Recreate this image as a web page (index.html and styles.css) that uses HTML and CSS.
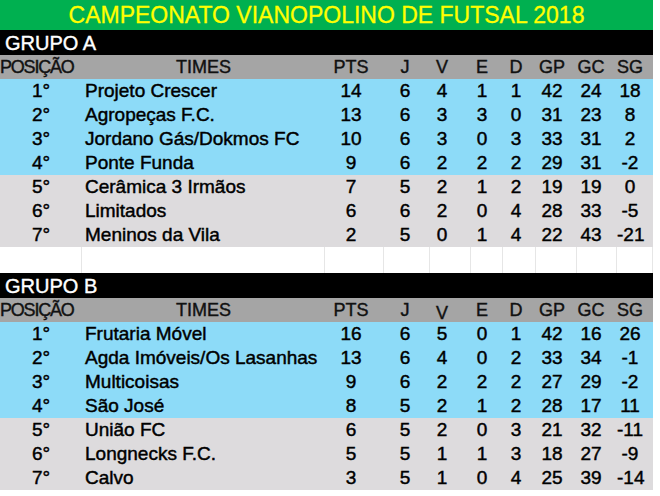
FILE: index.html
```html
<!DOCTYPE html>
<html lang="pt-BR">
<head>
<meta charset="utf-8">
<title>Campeonato Vianopolino de Futsal 2018</title>
<link rel="stylesheet" href="styles.css">
</head>
<body>
<div class="sheet">
  <div class="title">CAMPEONATO VIANOPOLINO DE FUTSAL 2018</div>

  <div class="group">GRUPO A</div>
  <div class="row head">
    <div class="pos narrow">POSIÇÃO</div><div class="team center">TIMES</div>
    <div class="n c1">PTS</div><div class="n c2">J</div><div class="n c3">V</div><div class="n c4">E</div><div class="n c5">D</div><div class="n c6">GP</div><div class="n c7">GC</div><div class="n c8">SG</div>
  </div>
  <div class="row q"><div class="pos">1°</div><div class="team">Projeto Crescer</div><div class="n c1">14</div><div class="n c2">6</div><div class="n c3">4</div><div class="n c4">1</div><div class="n c5">1</div><div class="n c6">42</div><div class="n c7">24</div><div class="n c8">18</div></div>
  <div class="row q"><div class="pos">2°</div><div class="team">Agropeças F.C.</div><div class="n c1">13</div><div class="n c2">6</div><div class="n c3">3</div><div class="n c4">3</div><div class="n c5">0</div><div class="n c6">31</div><div class="n c7">23</div><div class="n c8">8</div></div>
  <div class="row q"><div class="pos">3°</div><div class="team">Jordano Gás/Dokmos FC</div><div class="n c1">10</div><div class="n c2">6</div><div class="n c3">3</div><div class="n c4">0</div><div class="n c5">3</div><div class="n c6">33</div><div class="n c7">31</div><div class="n c8">2</div></div>
  <div class="row q"><div class="pos">4°</div><div class="team">Ponte Funda</div><div class="n c1">9</div><div class="n c2">6</div><div class="n c3">2</div><div class="n c4">2</div><div class="n c5">2</div><div class="n c6">29</div><div class="n c7">31</div><div class="n c8">-2</div></div>
  <div class="row o"><div class="pos">5°</div><div class="team">Cerâmica 3 Irmãos</div><div class="n c1">7</div><div class="n c2">5</div><div class="n c3">2</div><div class="n c4">1</div><div class="n c5">2</div><div class="n c6">19</div><div class="n c7">19</div><div class="n c8">0</div></div>
  <div class="row o"><div class="pos">6°</div><div class="team">Limitados</div><div class="n c1">6</div><div class="n c2">6</div><div class="n c3">2</div><div class="n c4">0</div><div class="n c5">4</div><div class="n c6">28</div><div class="n c7">33</div><div class="n c8">-5</div></div>
  <div class="row o"><div class="pos">7°</div><div class="team">Meninos da Vila</div><div class="n c1">2</div><div class="n c2">5</div><div class="n c3">0</div><div class="n c4">1</div><div class="n c5">4</div><div class="n c6">22</div><div class="n c7">43</div><div class="n c8">-21</div></div>

  <div class="row empty"><div></div><div></div><div></div><div></div><div></div><div></div><div></div><div></div><div></div><div></div></div>

  <div class="group">GRUPO B</div>
  <div class="row head">
    <div class="pos narrow">POSIÇÃO</div><div class="team center">TIMES</div>
    <div class="n c1">PTS</div><div class="n c2">J</div><div class="n c3 low">V</div><div class="n c4">E</div><div class="n c5">D</div><div class="n c6">GP</div><div class="n c7">GC</div><div class="n c8">SG</div>
  </div>
  <div class="row q"><div class="pos">1°</div><div class="team">Frutaria Móvel</div><div class="n c1">16</div><div class="n c2">6</div><div class="n c3">5</div><div class="n c4">0</div><div class="n c5">1</div><div class="n c6">42</div><div class="n c7">16</div><div class="n c8">26</div></div>
  <div class="row q"><div class="pos">2°</div><div class="team">Agda Imóveis/Os Lasanhas</div><div class="n c1">13</div><div class="n c2">6</div><div class="n c3">4</div><div class="n c4">0</div><div class="n c5">2</div><div class="n c6">33</div><div class="n c7">34</div><div class="n c8">-1</div></div>
  <div class="row q"><div class="pos">3°</div><div class="team">Multicoisas</div><div class="n c1">9</div><div class="n c2">6</div><div class="n c3">2</div><div class="n c4">2</div><div class="n c5">2</div><div class="n c6">27</div><div class="n c7">29</div><div class="n c8">-2</div></div>
  <div class="row q"><div class="pos">4°</div><div class="team">São José</div><div class="n c1">8</div><div class="n c2">5</div><div class="n c3">2</div><div class="n c4">1</div><div class="n c5">2</div><div class="n c6">28</div><div class="n c7">17</div><div class="n c8">11</div></div>
  <div class="row o"><div class="pos">5°</div><div class="team">União FC</div><div class="n c1">6</div><div class="n c2">5</div><div class="n c3">2</div><div class="n c4">0</div><div class="n c5">3</div><div class="n c6">21</div><div class="n c7">32</div><div class="n c8">-11</div></div>
  <div class="row o"><div class="pos">6°</div><div class="team">Longnecks F.C.</div><div class="n c1">5</div><div class="n c2">5</div><div class="n c3">1</div><div class="n c4">1</div><div class="n c5">3</div><div class="n c6">18</div><div class="n c7">27</div><div class="n c8">-9</div></div>
  <div class="row o"><div class="pos">7°</div><div class="team">Calvo</div><div class="n c1">3</div><div class="n c2">5</div><div class="n c3">1</div><div class="n c4">0</div><div class="n c5">4</div><div class="n c6">25</div><div class="n c7">39</div><div class="n c8">-14</div></div>
</div>
</body>
</html>
```

FILE: styles.css
```css
html, body {
  margin: 0;
  padding: 0;
  background: #ffffff;
}

body {
  font-family: "Liberation Sans", Arial, sans-serif;
  color: #000000;
}

.sheet {
  width: 653px;
  display: flex;
  flex-direction: column;
}

.title {
  height: 30px;
  line-height: 30px;
  background: #00b050;
  color: #ffff00;
  font-size: 23px;
  text-align: center;
  white-space: nowrap;
  -webkit-text-stroke: 0.3px #ffff00;
}

.group {
  height: 25px;
  line-height: 26px;
  background: #000000;
  color: #ffffff;
  font-size: 20px;
  padding-left: 5px;
  -webkit-text-stroke: 0.4px #ffffff;
}

.row {
  display: grid;
  grid-template-columns: 82px 243px 59px 46px 41px 32px 33px 41px 40px 36px;
  height: 24px;
  line-height: 24px;
  font-size: 19px;
  white-space: nowrap;
  -webkit-text-stroke: 0.45px #000000;
}

.head {
  background: #a5a5a5;
  font-size: 18px;
  color: #111111;
  -webkit-text-stroke: 0.4px #111111;
}

.q {
  background: #8ddbf8;
}

.o {
  background: #dddbdd;
}

.empty {
  height: 26px;
  background: #ffffff;
}

.empty > div {
  border-right: 1px solid #e6e6e6;
}

.pos {
  text-align: center;
}

.pos.narrow {
  text-align: left;
  letter-spacing: -1.2px;
}

.team {
  padding-left: 3px;
}

.team.center {
  padding-left: 0;
  text-align: center;
}

.n {
  text-align: center;
}

.c1 { padding-right: 7px; }
.c2 { padding-right: 4px; }
.c3 { padding-right: 17px; }
.c4 { padding-right: 10px; }
.c5 { padding-right: 7px; }
.c6 { padding-right: 9px; }
.c7 { padding-right: 12px; }
.c8 { padding-right: 10px; }

.low {
  padding-top: 3px;
}
```
